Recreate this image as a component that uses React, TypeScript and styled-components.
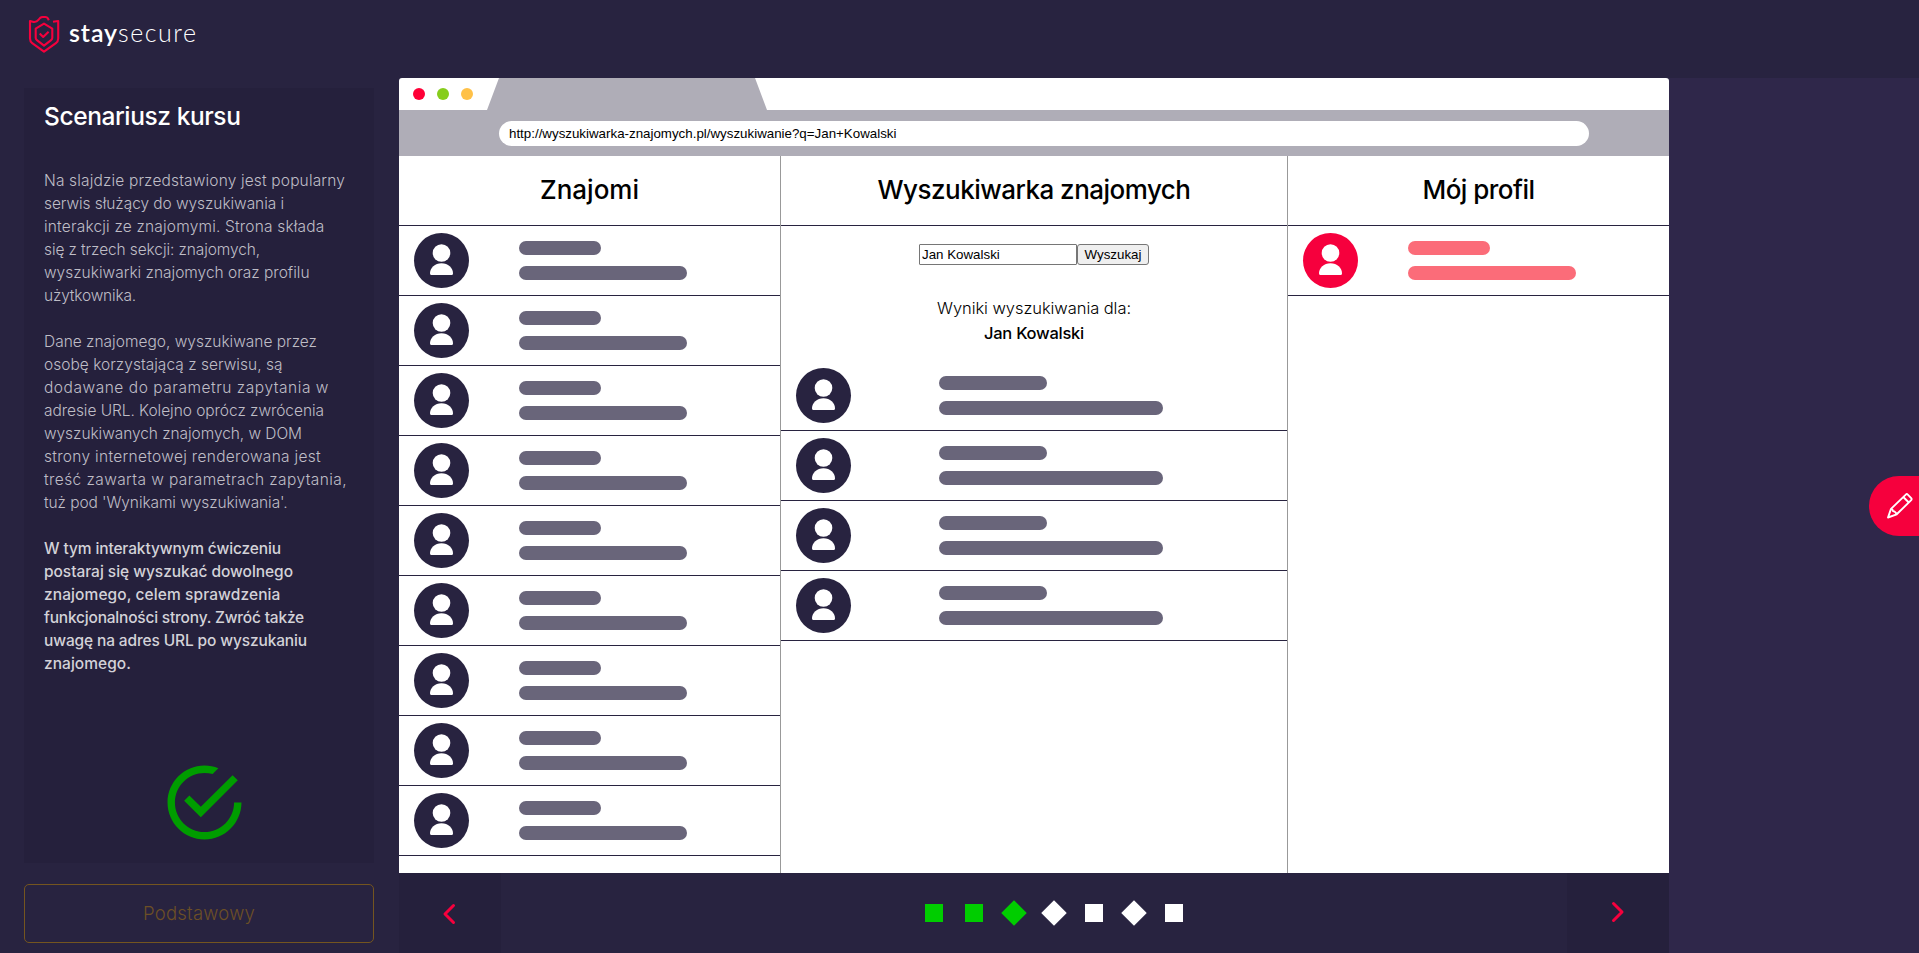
import React, { useLayoutEffect, useRef, useState } from "react";
import styled, { createGlobalStyle, css } from "styled-components";

const color = {
  page: "#2f274a",
  bar: "#282340",
  panel: "#25203c",
  red: "#f6003d",
  chrome: "#afadb7",
  muted: "#69657a",
};

const GlobalStyle = createGlobalStyle`
  * { box-sizing: border-box; }
  html, body { margin: 0; height: 100%; overflow: hidden; }
  body { background: ${color.page}; font-family: Inter, "Open Sans", sans-serif; font-weight: 300; }
  h1, h2, p { margin: 0; font-weight: inherit; }
`;

const Page = styled.div`
  display: grid;
  grid-template: 78px 875px / 399px 1270px 1fr;
  width: 1919px;
  height: 953px;
`;

const Header = styled.header`
  grid-column: 1 / -1;
  display: flex;
  align-items: flex-start;
  padding: 14px 0 0 27px;
  background: ${color.bar};
`;

const LogoMark = styled.svg`
  width: 34px;
  height: 42px;
`;

const LogoText = styled.div`
  margin: 4px 0 0 8px;
  font: 300 25px/28px Lato, sans-serif;
  color: #fff;
`;

const LogoStrong = styled.span`
  font-weight: 600;
`;

const Sidebar = styled.aside`
  display: flex;
  flex-direction: column;
  gap: 21px;
  padding: 10px 25px 10px 24px;
  background: ${color.bar};
`;

const Scenario = styled.section`
  display: flex;
  flex-direction: column;
  height: 775px;
  padding: 12px 20px 0;
  background: ${color.panel};
`;

const ScenarioTitle = styled.h1`
  height: 62px;
  font-size: 24.5px;
  line-height: 32px;
  font-weight: 500;
  color: #fff;
`;

const Paragraph = styled.p<{ $strong?: boolean }>`
  margin-top: 7px;
  margin-bottom: 16px;
  font-size: 15.5px;
  line-height: 23px;
  font-weight: ${(p) => (p.$strong ? 550 : 300)};
  color: ${(p) => (p.$strong ? "#d3d2d8" : "#bfbdc6")};
`;

const Line = styled.span`
  display: block;
  height: 23px;
`;

const Fitted = styled.span`
  display: inline-block;
  white-space: nowrap;
`;

const DoneIcon = styled.svg`
  width: 91px;
  height: 91px;
  margin: 66px 0 0 114.5px;
  fill: #009d00;
`;

const LevelButton = styled.button`
  height: 59px;
  padding: 0;
  border: 1px solid #74551f;
  border-radius: 5px;
  background: transparent;
  font: 300 18.5px/27px Inter, sans-serif;
  color: #6c4f26;
`;

const Stage = styled.main`
  display: flex;
  flex-direction: column;
  background: ${color.bar};
`;

const Browser = styled.div`
  display: flex;
  flex-direction: column;
  height: 795px;
  overflow: hidden;
  border-radius: 3px 3px 0 0;
  background: #fff;
`;

const TabBar = styled.div`
  display: flex;
  align-items: center;
  height: 32px;
  padding-left: 14px;
`;

const Dot = styled.i<{ $color: string }>`
  width: 12px;
  height: 12px;
  margin-right: 12px;
  border-radius: 50%;
  background: ${(p) => p.$color};
`;

const Tab = styled.div`
  width: 280px;
  height: 32px;
  margin-left: 2px;
  background: ${color.chrome};
  clip-path: polygon(12px 0, 268px 0, 100% 100%, 0 100%);
`;

const AddressBar = styled.div`
  height: 46px;
  padding: 11px 80px 10px 100px;
  background: ${color.chrome};
`;

const Address = styled.div`
  height: 25px;
  padding-left: 10px;
  border-radius: 13px;
  background: #fff;
  font: 400 13.333px/25px "Liberation Sans", Arial, sans-serif;
  color: #000;
`;

const Columns = styled.div`
  display: grid;
  grid-template-columns: 381px 508px 381px;
  flex: 1;
`;

const Column = styled.section<{ $divided?: boolean }>`
  ${(p) => p.$divided && css`border: solid #999; border-width: 0 1px;`}
`;

const ColumnTitle = styled.h2`
  height: 70px;
  padding-top: 14px;
  border-bottom: 1px solid ${color.bar};
  font-size: 26px;
  line-height: 40px;
  font-weight: 500;
  text-align: center;
  color: #000;
`;

const Row = styled.div`
  display: flex;
  align-items: flex-start;
  height: 70px;
  padding: 7px 0 0 15px;
  border-bottom: 1px solid ${color.bar};
`;

const Avatar = styled.svg<{ $accent?: boolean }>`
  flex: none;
  width: 55px;
  height: 55px;
  border-radius: 50%;
  background: ${(p) => (p.$accent ? color.red : color.bar)};
  fill: #fff;
`;

const Bars = styled.div<{ $gap: number }>`
  display: flex;
  flex-direction: column;
  gap: 11px;
  margin: 8px 0 0 ${(p) => p.$gap}px;
`;

const Bar = styled.div<{ $width: number; $accent?: boolean }>`
  width: ${(p) => p.$width}px;
  height: 14px;
  border-radius: 7px;
  background: ${(p) => (p.$accent ? "#fb6c79" : color.muted)};
`;

const SearchForm = styled.form`
  display: flex;
  justify-content: center;
  padding-top: 18px;
`;

const SearchInput = styled.input`
  width: 158px;
  height: 21px;
  padding: 1px 2px;
  border: 1px solid #767676;
  border-radius: 1px;
  outline: none;
  font: 400 13.333px/17px "Liberation Sans", Arial, sans-serif;
  color: #000;
`;

const SearchButton = styled.button`
  width: 72px;
  height: 21px;
  padding: 0;
  border: 1px solid #767676;
  border-radius: 3px;
  background: #efefef;
  font: 400 13.333px/17px "Liberation Sans", Arial, sans-serif;
  color: #000;
`;

const Results = styled.div`
  height: 96px;
  padding-top: 31px;
  font-size: 16.5px;
  line-height: 25px;
  text-align: center;
  color: #000;
`;

const ResultName = styled.div`
  font-weight: 550;
`;

const Footer = styled.footer`
  display: flex;
  justify-content: space-between;
  height: 80px;
`;

const NavButton = styled.button<{ $next?: boolean }>`
  display: flex;
  align-items: center;
  justify-content: center;
  width: 102px;
  padding: ${(p) => (p.$next ? "0 0 2px" : "2px 2px 0 0")};
  border: 0;
  background: ${color.panel};
`;

const Chevron = styled.svg`
  width: 14px;
  height: 22px;
  fill: none;
  stroke: ${color.red};
  stroke-width: 3;
  stroke-linecap: round;
  stroke-linejoin: round;
`;

const Steps = styled.div`
  display: flex;
  align-items: center;
  gap: 22px;
  margin-left: 40px;
`;

const Step = styled.i<{ $done?: boolean; $turned?: boolean }>`
  width: 18px;
  height: 18px;
  background: ${(p) => (p.$done ? "#00cd00" : "#fff")};
  transform: ${(p) => (p.$turned ? "rotate(45deg)" : "none")};
`;

const EditButton = styled.button`
  position: absolute;
  top: 476px;
  left: 1869px;
  display: flex;
  align-items: center;
  width: 50px;
  height: 60px;
  padding: 0 0 0 17px;
  border: 0;
  border-radius: 30px 0 0 30px;
  background: ${color.red};
`;

const Pencil = styled.svg`
  flex: none;
  width: 28px;
  height: 28px;
  fill: none;
  stroke: #fff;
  stroke-width: 1.9;
  stroke-linejoin: round;
`;

/* Spreads its letters so that the text takes up the given width. */
function Fit({ width, children }: { width: number; children: string }) {
  const ref = useRef<HTMLSpanElement>(null);
  const [spacing, setSpacing] = useState(0);
  useLayoutEffect(() => {
    const natural = ref.current!.getBoundingClientRect().width;
    setSpacing((width - natural) / children.length);
  }, []);
  return (
    <Fitted ref={ref} style={{ letterSpacing: spacing }}>
      {children}
    </Fitted>
  );
}

type TextLine = [string, number];

const intro: TextLine[] = [
  ["Na slajdzie przedstawiony jest popularny", 301],
  ["serwis służący do wyszukiwania i", 240],
  ["interakcji ze znajomymi. Strona składa", 280.5],
  ["się z trzech sekcji: znajomych,", 216],
  ["wyszukiwarki znajomych oraz profilu", 265.5],
  ["użytkownika.", 92],
];

const details: TextLine[] = [
  ["Dane znajomego, wyszukiwane przez", 273],
  ["osobę korzystającą z serwisu, są", 238.5],
  ["dodawane do parametru zapytania w", 285],
  ["adresie URL. Kolejno oprócz zwrócenia", 280],
  ["wyszukiwanych znajomych, w DOM", 258],
  ["strony internetowej renderowana jest", 277],
  ["treść zawarta w parametrach zapytania,", 303],
  ["tuż pod 'Wynikami wyszukiwania'.", 243.5],
];

const task: TextLine[] = [
  ["W tym interaktywnym ćwiczeniu", 237],
  ["postaraj się wyszukać dowolnego", 249],
  ["znajomego, celem sprawdzenia", 236.5],
  ["funkcjonalności strony. Zwróć także", 260],
  ["uwagę na adres URL po wyszukaniu", 263],
  ["znajomego.", 87],
];

function Lines({ lines, strong }: { lines: TextLine[]; strong?: boolean }) {
  return (
    <Paragraph $strong={strong}>
      {lines.map(([text, width]) => (
        <Line key={text}>
          <Fit width={width}>{text}</Fit>
        </Line>
      ))}
    </Paragraph>
  );
}

function Person({ wide, accent }: { wide?: boolean; accent?: boolean }) {
  return (
    <Row>
      <Avatar viewBox="0 0 55 55" $accent={accent}>
        <circle cx="27.5" cy="20" r="8.8" />
        <path d="M16 40.2C16 35 21 30.3 27.5 30.3S39 35 39 40.2c0 1.100-.5 1.800-1.500 1.800h-20c-1 0-1.500-.7-1.500-1.800z" />
      </Avatar>
      <Bars $gap={wide ? 88 : 50}>
        <Bar $width={wide ? 108 : 82} $accent={accent} />
        <Bar $width={wide ? 224 : 168} $accent={accent} />
      </Bars>
    </Row>
  );
}

const friends = Array.from({ length: 9 }, (_, i) => i);
const found = Array.from({ length: 4 }, (_, i) => i);
const steps: { done?: boolean; turned?: boolean }[] = [
  { done: true },
  { done: true },
  { done: true, turned: true },
  { turned: true },
  {},
  { turned: true },
  {},
];

export default function App() {
  return (
    <>
      <GlobalStyle />
      <Page>
        <Header>
          <LogoMark viewBox="27 14 34 42" fill="none" stroke={color.red} strokeWidth="2.1" strokeLinejoin="round">
            <path d="M53 21.800l5.200-.8v17.500c0 2-.8 3.500-2.300 4.600L44 51.700 32.200 43.100c-1.500-1.100-2.200-2.600-2.200-4.600V21l3.600.9c2 .2 3.600-.4 4.800-2l1.800-2c.8-.7 1.600-.9 2.600-.9h2.600c1.200 0 1.900.4 2.400 1.300l1 1.900" />
            <path d="M44 23.600l8.300 5v9.200c0 1-.4 1.700-1.200 2.300L44 45.600l-7.100-5.500c-.8-.6-1.200-1.300-1.200-2.300v-9.200z" />
            <path d="M39.700 33.500l3.500 3.400 5.400-5.100" />
          </LogoMark>
          <LogoText>
            <LogoStrong><Fit width={49}>stay</Fit></LogoStrong>
            <Fit width={79.5}>secure</Fit>
          </LogoText>
        </Header>

        <Sidebar>
          <Scenario>
            <ScenarioTitle><Fit width={196.5}>Scenariusz kursu</Fit></ScenarioTitle>
            <Lines lines={intro} />
            <Lines lines={details} />
            <Lines lines={task} strong />
            <DoneIcon viewBox="0 0 512 512">
              <path d="M170.718 216.482L141.600 245.600l93.600 93.600 208-208-29.118-29.118L235.200 279.918l-64.482-63.436zM422.400 256c0 91.518-74.883 166.400-166.400 166.400S89.600 347.518 89.600 256 164.482 89.600 256 89.600c15.600 0 31.200 2.082 45.764 6.241L334 62.600C310.161 53.200 283.600 48 256 48 141.600 48 48 141.600 48 256s93.600 208 208 208 208-93.600 208-208h-41.600z" />
            </DoneIcon>
          </Scenario>
          <LevelButton><Fit width={112}>Podstawowy</Fit></LevelButton>
        </Sidebar>

        <Stage>
          <Browser>
            <TabBar>
              <Dot $color="#ff0037" />
              <Dot $color="#86cd1c" />
              <Dot $color="#ffc148" />
              <Tab />
            </TabBar>
            <AddressBar>
              <Address>http://wyszukiwarka-znajomych.pl/wyszukiwanie?q=Jan+Kowalski</Address>
            </AddressBar>
            <Columns>
              <Column>
                <ColumnTitle><Fit width={99}>Znajomi</Fit></ColumnTitle>
                {friends.map((i) => <Person key={i} />)}
              </Column>
              <Column $divided>
                <ColumnTitle><Fit width={313}>Wyszukiwarka znajomych</Fit></ColumnTitle>
                <SearchForm onSubmit={(e) => e.preventDefault()}>
                  <SearchInput defaultValue="Jan Kowalski" />
                  <SearchButton>Wyszukaj</SearchButton>
                </SearchForm>
                <Results>
                  <div><Fit width={194}>Wyniki wyszukiwania dla:</Fit></div>
                  <ResultName><Fit width={100}>Jan Kowalski</Fit></ResultName>
                </Results>
                {found.map((i) => <Person key={i} wide />)}
              </Column>
              <Column>
                <ColumnTitle><Fit width={112}>Mój profil</Fit></ColumnTitle>
                <Person accent />
              </Column>
            </Columns>
          </Browser>
          <Footer>
            <NavButton aria-label="Wstecz">
              <Chevron viewBox="0 0 14 22"><path d="M11.500 2.500L3 11l8.500 8.500" /></Chevron>
            </NavButton>
            <Steps>
              {steps.map((s, i) => <Step key={i} $done={s.done} $turned={s.turned} />)}
            </Steps>
            <NavButton aria-label="Dalej" $next>
              <Chevron viewBox="0 0 14 22"><path d="M2.500 2.500L11 11l-8.500 8.500" /></Chevron>
            </NavButton>
          </Footer>
        </Stage>
      </Page>
      <EditButton aria-label="Edytuj">
        <Pencil viewBox="0 0 28 28">
          <path d="M2 25.500l3-8.600L19.800 2.600c.6-.6 1.400-.6 2 0l3.400 3.500c.6.6.6 1.400 0 2L10.700 22.300z" />
          <path d="M5 16.900c1.200.3 1.900 1 2 2.200 1.800.2 3 1.300 3.700 3.200M17.300 5l5.500 5.500" />
        </Pencil>
      </EditButton>
    </>
  );
}
